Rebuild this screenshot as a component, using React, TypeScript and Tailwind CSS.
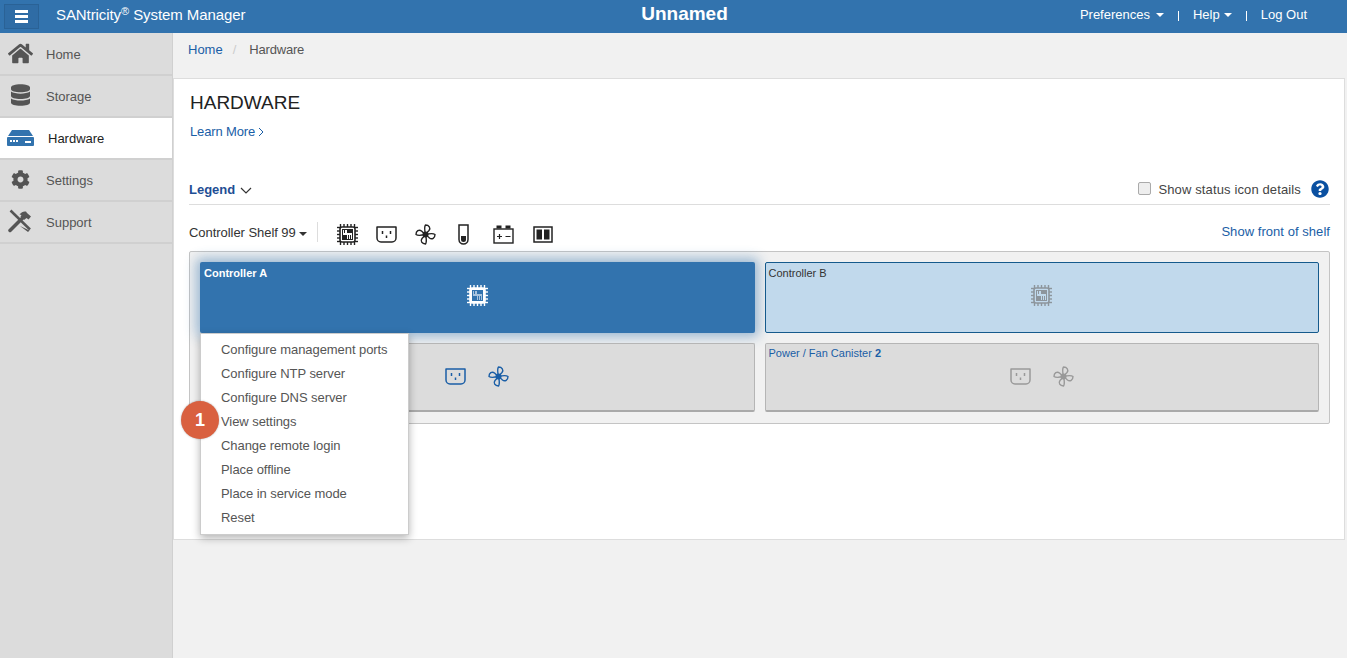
import { FaCog, FaDatabase, FaHome, FaQuestionCircle } from 'react-icons/fa';

function SupportIcon() {
  return (
    <svg width="24" height="24" viewBox="0 0 24 24" fill="currentColor">
      <path d="M2.500 1.500L22 20.500" fill="none" stroke="currentColor" strokeWidth="2.500" />
      <path d="M12 17L21.500 21.500 20 23z" />
      <path d="M2 21.500L14 9.500" fill="none" stroke="currentColor" strokeWidth="3.500" strokeLinecap="round" />
      <path d="M11.500 5.500C13.500 3 15.500 2 18 2.500l1 1.500 4 3.500-2.500 3-2-1.500-2.500 2-3.500-3.500 1-1.500z" />
    </svg>
  );
}

const navItems = [
  { label: 'Home', icon: <FaHome className="w-[25px] h-[25px] -mt-[2px]" /> },
  { label: 'Storage', icon: <FaDatabase className="w-[19px] h-[22px] -mt-[2px]" /> },
  { label: 'Hardware', active: true },
  { label: 'Settings', icon: <FaCog className="w-[19px] h-[19px] -mt-[2px]" /> },
  { label: 'Support', icon: <span className="flex -mt-[2px]"><SupportIcon /></span> },
];

const menuItems = [
  'Configure management ports',
  'Configure NTP server',
  'Configure DNS server',
  'View settings',
  'Change remote login',
  'Place offline',
  'Place in service mode',
  'Reset',
];

function Caret({ className }: { className: string }) {
  return <span className={`inline-block w-0 h-0 border-x-4 border-x-transparent border-t-4 ${className}`} />;
}

function HardwareIcon() {
  return (
    <svg width="27" height="16" viewBox="0 0 27 16" className="text-[#3273ae]">
      <path d="M5 0h17l4 6H1z" fill="currentColor" />
      <rect x="0" y="7" width="27" height="9" rx="1" fill="currentColor" />
      <rect x="3" y="10" width="2" height="2" fill="#fff" />
      <rect x="6" y="10" width="2" height="2" fill="#fff" />
      <rect x="9" y="10" width="2" height="2" fill="#fff" />
      <rect x="18" y="11" width="6" height="2" fill="#fff" />
    </svg>
  );
}

function ChipIcon({ color, fill = false }: { color: string; fill?: boolean }) {
  const pins = [3.5, 7, 10.5, 14, 17.5];
  const ink = fill ? '#3273ae' : color;
  return (
    <svg width="21" height="21" viewBox="0 0 21 21" fill="none" stroke={color}>
      {pins.map((p) => (
        <g key={p} strokeWidth="1.4">
          <path d={`M${p} 0v3`} />
          <path d={`M${p} 18v3`} />
          <path d={`M0 ${p}h3`} />
          <path d={`M18 ${p}h3`} />
        </g>
      ))}
      <rect x="3" y="3" width="15" height="15" rx="2" strokeWidth="1.6" fill={fill ? color : 'none'} />
      <rect x="5.500" y="5.500" width="10" height="10" strokeWidth="1" fill={fill ? '#a9c4de' : 'none'} stroke={ink} />
      <path d="M10 6h5v3h-5z" fill={ink} stroke="none" />
      <path d="M6 11h4v4H6z" fill={ink} stroke="none" />
      <path d="M7.500 6v3M11.500 11v4M13.500 11v4" stroke={ink} strokeWidth="1" />
    </svg>
  );
}

function OutletIcon({ color }: { color: string }) {
  return (
    <svg width="21" height="17" viewBox="0 0 21 17" fill="none" stroke={color}>
      <path d="M1 1h19v11a4 4 0 0 1-4 4H5a4 4 0 0 1-4-4z" strokeWidth="1.5" strokeLinejoin="round" />
      <path d="M6.500 5v3M14.500 5v3M10.500 9.500v2.500" strokeWidth="1.500" />
    </svg>
  );
}

function FanIcon({ color }: { color: string }) {
  const blade = 'M10.500 10.500C9.500 6 9 3 10.500 1 14 1 16 4 14 6.500 12.500 8 11.500 9 10.500 10.500z';
  return (
    <svg width="21" height="21" viewBox="0 0 21 21" fill="none" stroke={color} strokeWidth="1.400" strokeLinejoin="round">
      <path d={blade} />
      <path d={blade} transform="rotate(90 10.500 10.500)" />
      <path d={blade} transform="rotate(180 10.500 10.500)" />
      <path d={blade} transform="rotate(270 10.500 10.500)" />
      <circle cx="10.500" cy="10.500" r="3" fill={color} stroke="none" />
    </svg>
  );
}

function TubeIcon() {
  return (
    <svg width="11" height="21" viewBox="0 0 11 21" fill="none" stroke="#222">
      <path d="M1 1h9v14.500a4.500 4.500 0 0 1-9 0z" strokeWidth="1.500" />
      <path d="M3 12h5v3.500a2.500 2.500 0 0 1-5 0z" fill="#222" stroke="none" />
    </svg>
  );
}

function BatteryIcon() {
  return (
    <svg width="21" height="19" viewBox="0 0 21 19" fill="none" stroke="#222">
      <rect x="1" y="4" width="19" height="14" strokeWidth="1.400" />
      <path d="M3.500 2h5M12.500 2h5" strokeWidth="3" />
      <path d="M4 11.500h5M6.500 9v5M12.500 11.500h5" strokeWidth="1.200" />
    </svg>
  );
}

function PanelsIcon() {
  return (
    <svg width="20" height="17" viewBox="0 0 20 17" fill="none" stroke="#222">
      <rect x="1" y="1" width="18" height="15" strokeWidth="1.500" />
      <rect x="3.500" y="3.500" width="5.500" height="10" fill="#222" stroke="none" />
      <rect x="11" y="3.500" width="5.500" height="10" fill="#222" stroke="none" />
    </svg>
  );
}

export default function App() {
  return (
    <div className="h-screen flex flex-col overflow-hidden bg-[#f1f1f1] text-[13px] text-[#333] font-['Liberation_Sans',Arial,sans-serif]">
      <header className="h-[33px] shrink-0 flex bg-[#3273ae] text-white">
        <div className="w-[641px] flex items-start">
          <button className="ml-[4px] mt-[4px] w-[35px] h-[25px] flex flex-col items-center justify-center gap-[2px] border border-[#2a6296] bg-[#2f6ca5]">
            <span className="w-[13px] h-[3px] bg-white" />
            <span className="w-[13px] h-[3px] bg-white" />
            <span className="w-[13px] h-[3px] bg-white" />
          </button>
          <div className="ml-[17px] mt-[5px] text-[15px] leading-[20px] tracking-[-0.08px] whitespace-nowrap">
            SANtricity<sup className="text-[11px] leading-none">®</sup> System Manager
          </div>
        </div>
        <div className="w-[87px] pt-[3px] text-center text-[19px] leading-[22px] font-bold whitespace-nowrap">Unnamed</div>
        <nav className="ml-auto mr-[40px] flex items-start pt-[6px] leading-[18px]">
          <span>Preferences</span>
          <Caret className="ml-[6px] mt-[7px] border-t-white" />
          <span className="ml-[14px] mt-[5px] w-px h-[10px] bg-white" />
          <span className="ml-[14px]">Help</span>
          <Caret className="ml-[4px] mt-[7px] border-t-white" />
          <span className="ml-[14px] mt-[5px] w-px h-[10px] bg-white" />
          <span className="ml-[14px]">Log Out</span>
        </nav>
      </header>

      <div className="flex-1 flex min-h-0">
        <aside className="w-[173px] shrink-0 pt-[1px] bg-[#dcdcdc] border-r border-[#d0d0d0]">
          {navItems.map((item) =>
            item.active ? (
              <div key={item.label} className="h-[42px] flex items-center pl-[7px] bg-white border-b-2 border-[#d0d0d0] text-[#222]">
                <HardwareIcon />
                <span className="ml-[14px] mt-[2px]">{item.label}</span>
              </div>
            ) : (
              <div key={item.label} className="h-[42px] flex items-center border-b-2 border-[#d0d0d0] text-[#555]">
                <span className="w-[46px] pl-[7px] pr-[13px] flex justify-center text-[#555]">{item.icon}</span>
                <span className="mt-[2px]">{item.label}</span>
              </div>
            ),
          )}
        </aside>

        <main className="flex-1 min-w-0 pr-[1px]">
          <div className="h-[45px] pl-[15px] pt-[8px] flex items-start leading-[18px]">
            <span className="text-[#1a5ea6]">Home</span>
            <span className="ml-[10px] text-[#ccc]">/</span>
            <span className="ml-[13px] text-[#555] tracking-[-0.2px]">Hardware</span>
          </div>

          <section className="relative h-[462px] w-[1172px] bg-white border border-[#ddd] pl-[15px] pr-[14px] pt-[12px]">
            <h1 className="pl-[1px] text-[19px] leading-[24px] text-[#222]">HARDWARE</h1>
            <div className="mt-[7px] pl-[1px] flex items-center leading-[20px] text-[#1a5ea6] tracking-[-0.15px]">
              Learn More
              <svg width="6" height="10" viewBox="0 0 6 10" fill="none" stroke="#1a5ea6" className="ml-[3px]">
                <path d="M1 1l4 4-4 4" />
              </svg>
            </div>

            <div className="mt-[37px] h-[26px] flex items-start border-b border-[#ddd]">
              <span className="mt-[1px] font-bold text-[#1e4e94] leading-[20px]">Legend</span>
              <svg width="12" height="7" viewBox="0 0 12 7" fill="none" stroke="#333" strokeWidth="1.200" className="ml-[5px] mt-[8px]">
                <path d="M1 1l5 5 5-5" />
              </svg>
              <div className="ml-auto flex items-start">
                <span className="mt-[3px] w-[13px] h-[13px] rounded-[2px] border border-[#aaa] bg-[#eee]" />
                <span className="ml-[7px] mt-[1px] leading-[20px] text-[#444] tracking-[0.13px]">Show status icon details</span>
                <FaQuestionCircle className="ml-[10px] mr-[1px] mt-[1px] w-[18px] h-[18px] text-[#0a50a1]" />
              </div>
            </div>

            <div className="mt-[15px] h-[31px] flex items-start">
              <span className="mt-[3px] leading-[20px] text-[#333] tracking-[-0.05px]">Controller Shelf 99</span>
              <Caret className="ml-[3px] mt-[12px] border-t-[#333]" />
              <span className="ml-[10px] mt-[2px] w-px h-[20px] bg-[#ddd]" />
              <div className="ml-[19px] mt-[1px] flex items-center h-[26px] gap-[18px]">
                <ChipIcon color="#222" />
                <OutletIcon color="#222" />
                <FanIcon color="#222" />
                <span className="ml-[4px] mr-[6px] flex"><TubeIcon /></span>
                <BatteryIcon />
                <span className="ml-[1px] flex"><PanelsIcon /></span>
              </div>
              <span className="ml-auto mt-[2px] leading-[20px] text-[#1a5ea6] tracking-[0.05px]">Show front of shelf</span>
            </div>

            <div className="h-[173px] grid grid-cols-2 grid-rows-[71px_69px] gap-[10px] px-[10px] pt-[10px] bg-[#f1f1f1] border border-[#c4c4c4] rounded-[2px]">
              <div className="rounded-[2px] bg-[#3273ae] shadow-[0_0_12px_4px_rgba(50,115,174,0.45)]">
                <div className="pl-[4px] pt-[4px] text-[11px] leading-[14px] font-bold text-white">Controller A</div>
                <div className="flex justify-center mt-[5px]"><ChipIcon color="#fff" fill /></div>
              </div>
              <div className="rounded-[2px] bg-[#c1d9ec] border border-[#155a8c]">
                <div className="pl-[3px] pt-[3px] text-[11px] leading-[14px] text-[#333]">Controller B</div>
                <div className="flex justify-center mt-[5px]"><ChipIcon color="#8d959c" /></div>
              </div>
              <div className="rounded-[2px] bg-[#dcdcdc] border border-[#b5b5b5] border-b-2 border-b-[#aaa]">
                <div className="flex justify-center items-center gap-[22px] mt-[22px]">
                  <OutletIcon color="#1a5ea6" />
                  <FanIcon color="#1a5ea6" />
                </div>
              </div>
              <div className="rounded-[2px] bg-[#dcdcdc] border border-[#b5b5b5] border-b-2 border-b-[#aaa]">
                <div className="pl-[3px] pt-[2px] text-[11px] leading-[14px] text-[#1a5ea6]">Power / Fan Canister <b>2</b></div>
                <div className="flex justify-center items-center gap-[22px] mt-[6px]">
                  <OutletIcon color="#999" />
                  <FanIcon color="#999" />
                </div>
              </div>
            </div>

            <div className="absolute left-[26px] top-[254px] w-[209px] pt-[4px] pb-[4px] bg-white border border-[#ccc] shadow-[0_3px_8px_rgba(0,0,0,0.3)]">
              {menuItems.map((m) => (
                <div key={m} className="h-[24px] pl-[20px] leading-[24px] text-[#555] tracking-[-0.07px] whitespace-nowrap">{m}</div>
              ))}
            </div>

            <div className="absolute left-[7px] top-[322px] w-[38px] h-[38px] rounded-full bg-[#d9603f] flex items-center justify-center text-white font-bold text-[18px] shadow-[0_0_2px_rgba(0,0,0,0.3)]">1</div>
          </section>
        </main>
      </div>
    </div>
  );
}
